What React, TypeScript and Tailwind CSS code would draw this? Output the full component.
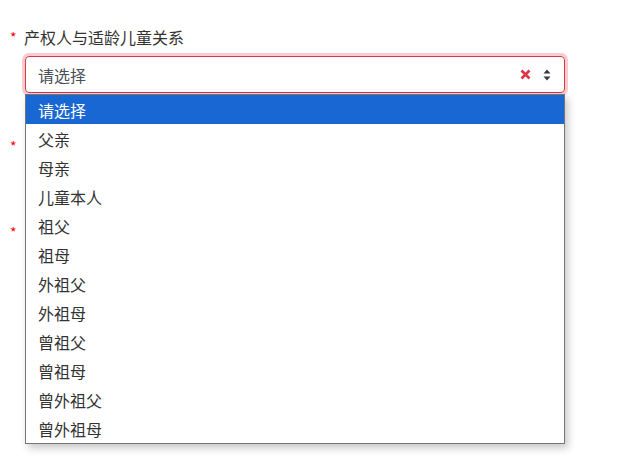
import React from "react";

const options = [
  "请选择",
  "父亲",
  "母亲",
  "儿童本人",
  "祖父",
  "祖母",
  "外祖父",
  "外祖母",
  "曾祖父",
  "曾祖母",
  "曾外祖父",
  "曾外祖母",
];

function Star() {
  return (
    <span className="w-[14px] shrink-0 text-[14px] leading-none text-[#ff0000]">*</span>
  );
}

export default function App() {
  return (
    <div
      className="min-h-[470px] w-[644px] bg-white pl-[10px] pt-[27px] text-[16px] text-[#333]"
      style={{ fontFamily: '"Noto Sans CJK SC", "Noto Sans", sans-serif' }}
    >
      <div className="flex h-[20px] items-center">
        <Star />
        <span className="leading-[20px] text-[#333]">产权人与适龄儿童关系</span>
      </div>
      <div className="relative z-10 ml-[15px] mt-[9px] w-[540px]">
        <div className="flex h-[37px] items-center rounded-[4px] border border-[#dc3545] pl-[12px] pr-[13px] shadow-[0_0_0_3px_rgba(220,53,69,0.25)]">
          <span className="flex-1 text-[#495057]">请选择</span>
          <svg width="11" height="11" viewBox="0 0 11 11" className="mr-[12px]">
            <path d="M1.5 1.5 L9.5 9.5 M9.5 1.5 L1.5 9.5" stroke="#dc3545" strokeWidth="2.6" strokeLinecap="butt" />
          </svg>
          <svg width="8" height="12" viewBox="0 0 8 12">
            <path d="M4 0.5 L7.5 4.5 L0.5 4.5 Z M4 11.5 L7.5 7.5 L0.5 7.5 Z" fill="#343a40" />
          </svg>
        </div>
        <div className="absolute left-0 top-[38px] w-[540px] border border-[#767676] bg-white shadow-[3px_4px_8px_rgba(0,0,0,0.22)]">
          {options.map((o, i) => (
            <div
              key={o}
              className={
                "flex h-[29px] items-center pl-[12px] " +
                (i === 0 ? "bg-[#1967d2] text-white" : "text-[#333]")
              }
            >
              {o}
            </div>
          ))}
        </div>
      </div>
      <div className="mt-[43px] flex h-[20px] items-center">
        <Star />
      </div>
      <div className="ml-[15px] mt-[9px] h-[37px] w-[540px] rounded-[4px] border border-[#ced4da]" />
      <div className="mt-[20px] flex h-[20px] items-center">
        <Star />
      </div>
    </div>
  );
}
